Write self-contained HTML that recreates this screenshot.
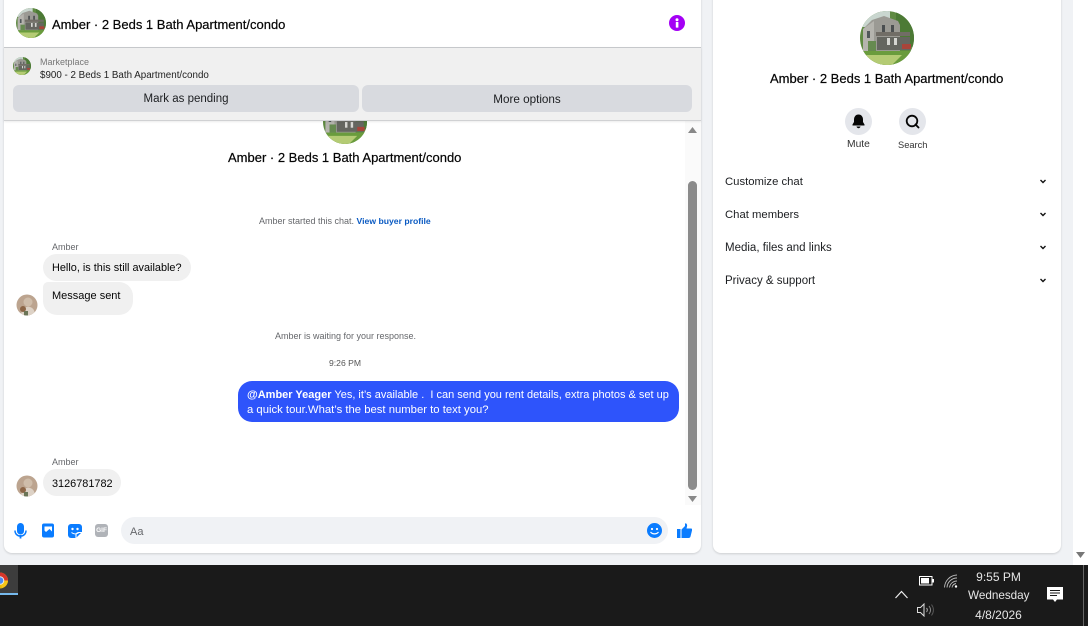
<!DOCTYPE html>
<html><head><meta charset="utf-8"><style>
html,body{margin:0;padding:0}
body{width:1088px;height:626px;overflow:hidden;background:#f0f2f5;position:relative;font-family:"Liberation Sans",sans-serif;color:#050505}
.a{position:absolute}
.t{position:absolute;white-space:nowrap;font-size:11.5px;line-height:14px}
.s{font-size:9px;color:#65676b}
.h{font-size:13px;line-height:16px;font-weight:400;-webkit-text-stroke:.2px #050505}
svg{position:absolute;display:block}
.btn{position:absolute;top:85px;height:27px;background:#d8dadf;border-radius:6px;font-size:11.5px;line-height:29px;text-align:center;color:#1c1e21}
.b{position:absolute;background:#f0f0f0}
.ci{position:absolute;width:27px;height:27px;border-radius:50%;background:#e4e6eb}
</style></head><body>
<svg width="0" height="0"><defs>
<g id="house"><rect width="54" height="54" fill="#5f8a42"/><rect x="0" y="0" width="30" height="16" fill="#c9d6cf"/><rect x="36" y="0" width="18" height="36" fill="#4c7a35"/><path d="M3 18L12 9 24 5 38 10 40 14V40H3Z" fill="#9b9a94"/><path d="M3 18L14 10V40H3Z" fill="#b5b4ae"/><path d="M16 21H50V25H16Z" fill="#716d66"/><rect x="17" y="26" width="33" height="13" fill="#656660"/><rect x="7" y="20" width="3" height="7" fill="#50575a"/><rect x="22" y="14" width="3" height="7" fill="#4a4e50"/><rect x="31" y="14" width="3" height="7" fill="#4a4e50"/><rect x="27" y="27" width="3" height="7" fill="#d6d6d2"/><rect x="34" y="27" width="3" height="7" fill="#d6d6d2"/><rect x="42" y="33" width="9" height="5" fill="#a9443a"/><rect x="8" y="30" width="8" height="10" fill="#668a50"/><path d="M0 40H54V54H0Z" fill="#6a9c3d"/><path d="M6 44H42L32 54H14Z" fill="#b4cb74"/></g>
<g id="lady"><rect width="22" height="22" fill="#bca48f"/><circle cx="12" cy="8" r="4.500" fill="#cfbdaa"/><path d="M5 22C5 14 10 12 14 13 18 14 19 18 19 22Z" fill="#ddd2c6"/><circle cx="7" cy="15" r="3" fill="#8d6647"/><rect x="8" y="17" width="4" height="5" fill="#6b7557"/></g>
<clipPath id="c54"><circle cx="27" cy="27" r="27"/></clipPath><clipPath id="c22"><circle cx="11" cy="11" r="10.5"/></clipPath>
</defs></svg>

<!-- left panel -->
<div class="a" style="left:4px;top:-10px;width:697px;height:563px;background:#fff;border-radius:8px;box-shadow:0 1px 2px rgba(0,0,0,.15)"></div>
<svg style="left:16px;top:8px" width="30" height="30" viewBox="0 0 54 54"><g clip-path="url(#c54)"><use href="#house"/></g></svg>
<div class="t h" style="left:52px;top:17px">Amber · 2 Beds 1 Bath Apartment/condo</div>
<svg style="left:669px;top:15px" width="16" height="16" viewBox="0 0 16 16"><circle cx="8" cy="8" r="8" fill="#a400f5"/><rect x="6.8" y="7" width="2.6" height="5.6" rx=".4" fill="#fff"/><circle cx="8" cy="4.7" r="1.5" fill="#fff"/></svg>

<!-- marketplace band -->
<div class="a" style="left:4px;top:47px;width:697px;height:74px;background:#f0f0f0;border-top:1px solid #c6c8cb;border-bottom:1px solid #d0d1d3;box-sizing:border-box;box-shadow:0 1px 2px rgba(0,0,0,.08);z-index:2">
<div class="btn" style="left:9px;top:37px;width:346px">Mark as pending</div>
<div class="btn" style="left:358px;top:37px;width:330px;font-size:11.7px">More options</div>
<svg style="left:9px;top:9px" width="18" height="18" viewBox="0 0 54 54"><g clip-path="url(#c54)"><use href="#house"/></g></svg>
<div class="t" style="left:36px;top:7px;font-size:9px;color:#777">Marketplace</div>
<div class="t" style="left:36px;top:21px;font-size:9.8px;color:#222">$900 - 2 Beds 1 Bath Apartment/condo</div>
</div>

<!-- thread -->
<svg style="left:322px;top:100px" width="46" height="44" viewBox="0 0 54 54"><g clip-path="url(#c54)"><use href="#house"/></g></svg>
<div class="t h" style="left:228px;top:150px;color:#050505">Amber · 2 Beds 1 Bath Apartment/condo</div>
<div class="t s" style="left:259px;top:214px">Amber started this chat. <span style="color:#0a5ac2;font-weight:700;font-size:8.65px">View buyer profile</span></div>
<div class="t s" style="left:52px;top:240px">Amber</div>
<div class="b" style="left:43px;top:254px;width:148px;height:27px;border-radius:14px"></div>
<div class="t" style="left:52px;top:261px;font-size:10.9px">Hello, is this still available?</div>
<div class="b" style="left:43px;top:282px;width:90px;height:33px;border-radius:5px 14px 14px 14px"></div>
<div class="t" style="left:52px;top:289px;font-size:11px">Message sent</div>
<svg style="left:16px;top:294px" width="22" height="22"><g clip-path="url(#c22)"><use href="#lady"/></g></svg>
<div class="t s" style="left:275px;top:329px">Amber is waiting for your response.</div>
<div class="t s" style="left:329px;top:356px;color:#555;font-size:8.6px">9:26 PM</div>
<div class="a" style="left:238px;top:381px;width:441px;height:41px;background:#2e54fb;border-radius:14px"></div>
<div class="t" style="left:247px;top:388px;font-size:11px;color:#fff;line-height:15px"><b>@Amber Yeager</b> Yes, it’s available .&nbsp; I can send you rent details, extra photos &amp; set up<br><span style="font-size:11.3px">a quick tour.What’s the best number to text you?</span></div>
<div class="t s" style="left:52px;top:455px">Amber</div>
<div class="b" style="left:43px;top:469px;width:78px;height:27px;border-radius:14px"></div>
<div class="t" style="left:52px;top:477px;font-size:10.9px">3126781782</div>
<svg style="left:16px;top:475px" width="22" height="22"><g clip-path="url(#c22)"><use href="#lady"/></g></svg>

<!-- scrollbar -->
<div class="a" style="left:685px;top:121px;width:16px;height:384px;background:#fafafa"></div>
<div class="a" style="left:688px;top:181px;width:9px;height:309px;background:#8b8b8b;border-radius:5px"></div>
<svg style="left:688px;top:127px" width="9" height="6"><path d="M0 6L4.500 0 9 6Z" fill="#888"/></svg>
<svg style="left:688px;top:496px" width="9" height="6"><path d="M0 0L4.500 6 9 0Z" fill="#888"/></svg>

<!-- composer -->
<svg style="left:14px;top:523px" width="13" height="16" viewBox="0 0 13 16"><rect x="3" y="0" width="7" height="11.5" rx="3.5" fill="#0a7cff"/><path d="M1 7.5C1 15 12 15 12 7.5" fill="none" stroke="#0a7cff" stroke-width="1.5"/><rect x="5.6" y="12" width="1.8" height="3.5" fill="#0a7cff"/></svg>
<svg style="left:42px;top:523px" width="12" height="15" viewBox="0 0 12 15"><rect x="0" y="0.500" width="12" height="14" rx="2" fill="#0a7cff"/><path d="M2.500 3.500H10V8.500L7.500 6 4 9 2.500 7.500Z" fill="#fff"/></svg>
<svg style="left:68px;top:524px" width="14" height="14" viewBox="0 0 14 14"><path d="M3 0H11A3 3 0 0 1 14 3V8L8 14H3A3 3 0 0 1 0 11V3A3 3 0 0 1 3 0Z" fill="#0a7cff"/><circle cx="4.500" cy="5" r="1.200" fill="#fff"/><circle cx="9.500" cy="5" r="1.200" fill="#fff"/><path d="M3.500 8.500C6 10.500 8 10.500 11 8.500M8 14V11A2.500 2.500 0 0 1 10.500 8.500H14" fill="none" stroke="#fff" stroke-width="1.100"/></svg>
<div class="a" style="left:95px;top:524px;width:13px;height:13px;border-radius:3px;background:#b0b3b8;color:#fff;font-size:6.500px;font-weight:700;line-height:13px;text-align:center">GIF</div>
<div class="a" style="left:121px;top:517px;width:547px;height:27px;background:#f0f2f5;border-radius:14px"></div>
<div class="t" style="left:130px;top:525px;font-size:11px;color:#65676b">Aa</div>
<svg style="left:647px;top:523px" width="15" height="15" viewBox="0 0 15 15"><circle cx="7.500" cy="7.500" r="7.500" fill="#0a7cff"/><circle cx="5" cy="6" r="1.100" fill="#fff"/><circle cx="10" cy="6" r="1.100" fill="#fff"/><path d="M3.500 9C5.500 11.500 9.500 11.500 11.500 9" fill="none" stroke="#fff" stroke-width="1.200"/></svg>
<svg style="left:677px;top:523px" width="15" height="15" viewBox="0 0 15 15"><rect x="0" y="6" width="3.500" height="9" fill="#0a7cff"/><path d="M4.500 6.500L8 3V0.500C9.500 0 10.500 1.500 10 3.500L9.500 5.500H14C15 5.500 15.300 6.500 15 7.500L13.500 13.500C13.300 14.500 12.500 15 11.500 15H4.500Z" fill="#0a7cff"/></svg>

<!-- right panel -->
<div class="a" style="left:713px;top:-10px;width:348px;height:563px;background:#fff;border-radius:8px;box-shadow:0 1px 2px rgba(0,0,0,.15)"></div>
<svg style="left:860px;top:11px" width="54" height="54" viewBox="0 0 54 54"><g clip-path="url(#c54)"><use href="#house"/></g></svg>
<div class="t h" style="left:770px;top:71px">Amber · 2 Beds 1 Bath Apartment/condo</div>
<div class="ci" style="left:845px;top:108px"></div>
<svg style="left:851px;top:114px" width="15" height="15" viewBox="0 0 15 15"><path d="M7.500 0.500C4.500 0.500 3 3 3 5.500V8L1.500 10.500V11.500H13.500V10.500L12 8V5.500C12 3 10.500 0.500 7.500 0.500Z" fill="#050505"/><path d="M5.500 12.500C6 14.800 9 14.800 9.500 12.500Z" fill="#050505"/></svg>
<div class="t" style="left:847px;top:138px;color:#333;font-size:10.3px">Mute</div>
<div class="ci" style="left:899px;top:108px"></div>
<svg style="left:905px;top:114px" width="15" height="15" viewBox="0 0 15 15"><circle cx="7" cy="7" r="5.300" fill="none" stroke="#050505" stroke-width="1.800"/><path d="M10.500 10.500L13.500 13.500" stroke="#050505" stroke-width="1.800" stroke-linecap="round"/></svg>
<div class="t" style="left:898px;top:138px;color:#333;font-size:9.3px">Search</div>
<div class="t" style="left:725px;top:175px;font-size:11.3px;color:#1c1e21">Customize chat</div>
<div class="t" style="left:725px;top:208px;font-size:11.3px;color:#1c1e21">Chat members</div>
<div class="t" style="left:725px;top:241px;font-size:11.5px;color:#1c1e21">Media, files and links</div>
<div class="t" style="left:725px;top:274px;font-size:11.5px;color:#1c1e21">Privacy &amp; support</div>
<svg style="left:1039px;top:179px" width="8" height="5"><path d="M1.500 1L4 3.500 6.500 1" fill="none" stroke="#111" stroke-width="1.400"/></svg>
<svg style="left:1039px;top:212px" width="8" height="5"><path d="M1.500 1L4 3.500 6.500 1" fill="none" stroke="#111" stroke-width="1.400"/></svg>
<svg style="left:1039px;top:245px" width="8" height="5"><path d="M1.500 1L4 3.500 6.500 1" fill="none" stroke="#111" stroke-width="1.400"/></svg>
<svg style="left:1039px;top:278px" width="8" height="5"><path d="M1.500 1L4 3.500 6.500 1" fill="none" stroke="#111" stroke-width="1.400"/></svg>

<!-- page scrollbar -->
<div class="a" style="left:1073px;top:0;width:15px;height:565px;background:#fff"></div>
<svg style="left:1076px;top:552px" width="9" height="6"><path d="M0 0L4.500 6 9 0Z" fill="#777"/></svg>

<!-- taskbar -->
<div class="a" style="left:0;top:565px;width:1088px;height:61px;background:#1a1a1a"></div>
<div class="a" style="left:0;top:565px;width:18px;height:30px;background:#3d3d3d;border-bottom:2px solid #76b9ed;box-sizing:border-box"></div>
<svg style="left:0;top:572px" width="9" height="17" viewBox="0 0 9 17"><circle cx="0" cy="8.500" r="8" fill="#e8b90c"/><path d="M-8 8.500A8 8 0 0 1 8 8.500H0Z" fill="#d6352c"/><path d="M0 8.500H8A8 8 0 0 1 2 16Z" fill="#f5c518"/><circle cx="0" cy="8.500" r="3.800" fill="#4a8af0" stroke="#eee" stroke-width="1"/></svg>
<svg style="left:919px;top:576px" width="15" height="10" viewBox="0 0 15 10"><rect x=".5" y=".5" width="12.500" height="8.500" fill="none" stroke="#fff"/><rect x="2" y="2" width="8" height="5.500" fill="#fff"/><rect x="13.500" y="3" width="1.500" height="3.500" fill="#fff"/></svg>
<svg style="left:944px;top:574px" width="14" height="14" viewBox="0 0 14 14" fill="none" stroke="#bbb" stroke-width=".9"><path d="M.5 13.500A13 13 0 0 1 13 1M3 13.500A10 10 0 0 1 13 4M5.500 13.500A7.500 7.500 0 0 1 13 7M8 13.500A5 5 0 0 1 12 9.500"/><circle cx="12" cy="12.500" r="1.200" fill="#fff" stroke="none"/></svg>
<svg style="left:895px;top:590px" width="13" height="9"><path d="M.5 8L6.500 1.500 12.500 8" fill="none" stroke="#eee" stroke-width="1.200"/></svg>
<svg style="left:917px;top:603px" width="17" height="14" viewBox="0 0 17 14" fill="none" stroke="#ddd" stroke-width="1"><path d="M.5 4.500H3.500L7 1V13L3.500 9.500H.5Z"/><path d="M9.500 5C10.500 6.200 10.500 7.800 9.500 9" stroke="#aaa"/><path d="M12 3C14 5.500 14 8.500 12 11" stroke="#888"/><path d="M14.500 1.500C17 5 17 9 14.500 12.500" stroke="#555"/></svg>
<div class="t" style="left:968px;top:569px;width:61px;text-align:center;font-size:12px;line-height:16px;color:#e6e6e6">9:55 PM</div>
<div class="t" style="left:968px;top:588px;width:61px;text-align:center;font-size:11.7px;line-height:16px;color:#e6e6e6">Wednesday</div>
<div class="t" style="left:968px;top:607px;width:61px;text-align:center;font-size:12px;line-height:16px;color:#e6e6e6">4/8/2026</div>
<svg style="left:1047px;top:587px" width="16" height="16" viewBox="0 0 16 16"><path d="M0 0H16V12.500H10L8 15 6 12.500H0Z" fill="#fff"/><path d="M3 3.500H13M3 6H13M3 8.500H10" stroke="#1a1a1a"/></svg>
<div class="a" style="left:1083px;top:565px;width:1px;height:61px;background:#666"></div>
</body></html>
